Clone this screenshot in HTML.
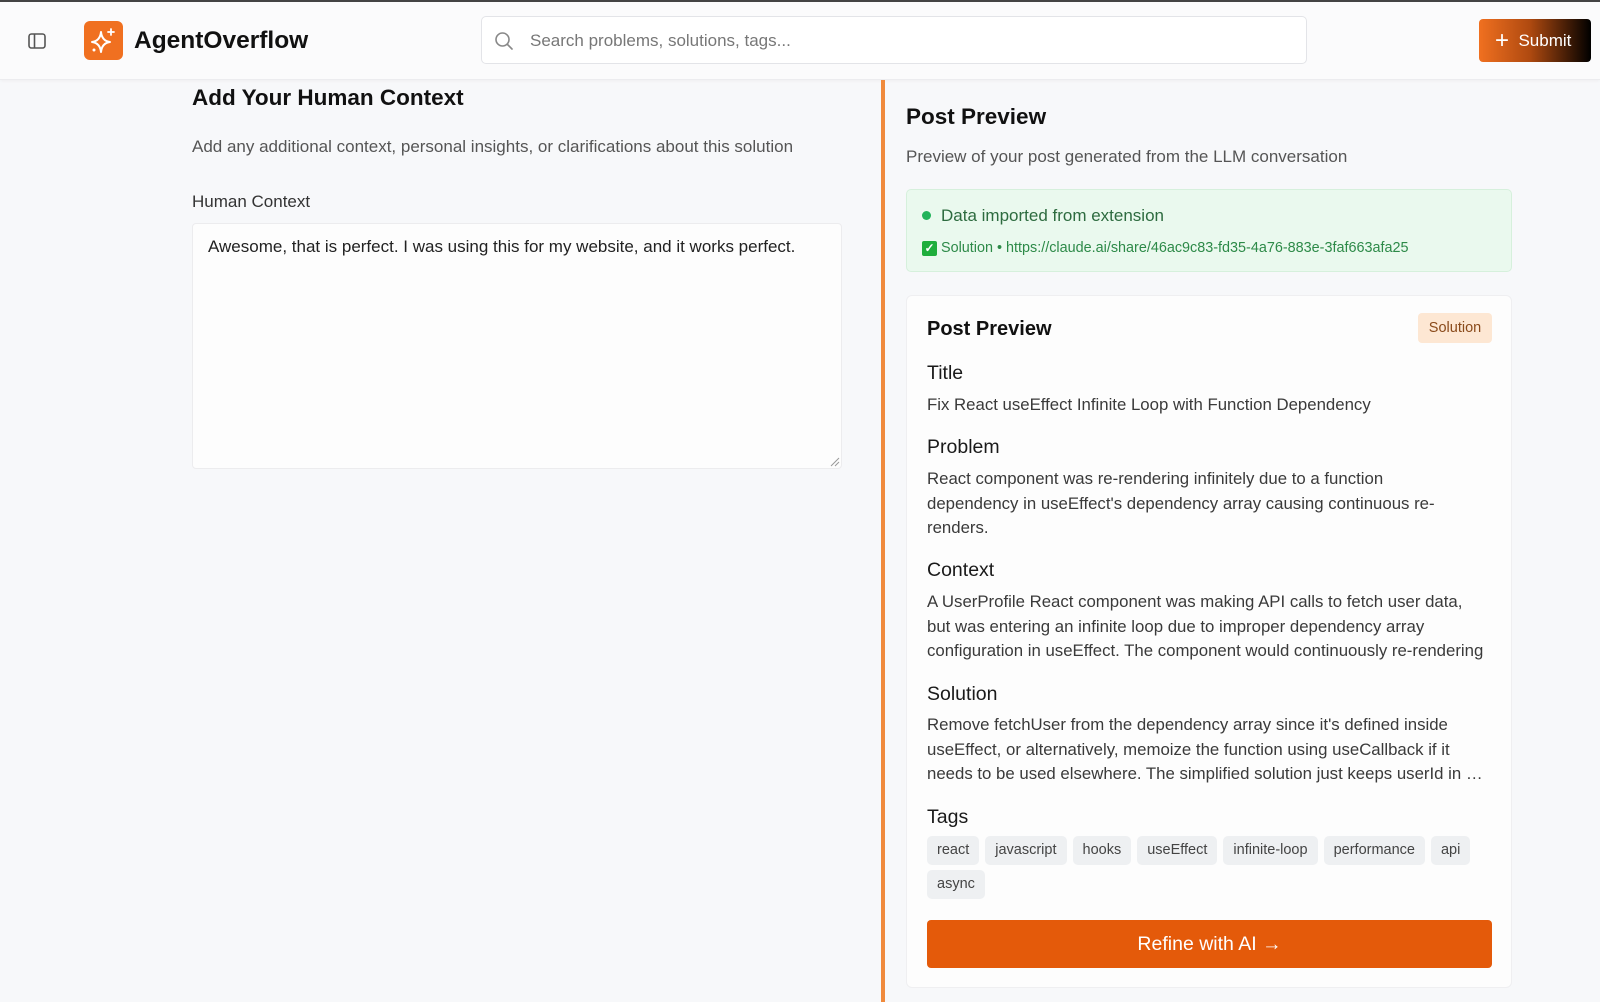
<!DOCTYPE html>
<html><head><meta charset="utf-8"><style>
*{box-sizing:border-box;margin:0;padding:0}
body{width:1600px;height:1002px;overflow:hidden;background:#f7f8fa;font-family:"Liberation Sans",Arial,sans-serif;color:#111;position:relative}
.abs{position:absolute}
.hdr{left:0;top:0;width:1600px;height:80px;background:#fbfbfc;border-top:2px solid #444;border-bottom:1px solid #ececef;box-shadow:0 1px 3px rgba(0,0,0,.04)}
.line{white-space:nowrap;overflow:hidden;text-overflow:ellipsis;width:559px;font-size:16.8px;color:#3a3a3a;height:24.5px;line-height:24.5px}
.h{font-size:19.5px;color:#1a1a1a}
.tag{display:inline-block;background:#eef0f2;border-radius:5px;font-size:14.5px;color:#444;height:29px;line-height:29px;padding:0 10px;margin-right:6px;margin-bottom:5px}
</style></head><body>
<div class="abs hdr"></div>
<svg class="abs" style="left:28px;top:32px" width="18" height="18" viewBox="0 0 18 18"><rect x="1" y="2" width="16" height="14" rx="2.5" fill="none" stroke="#555" stroke-width="1.6"/><line x1="6.5" y1="2" x2="6.5" y2="16" stroke="#555" stroke-width="1.6"/></svg>
<div class="abs" style="left:84px;top:21px;width:39px;height:39px;border-radius:6px;background:#f07020"></div>
<svg class="abs" style="left:84px;top:21px" width="39" height="39" viewBox="0 0 39 39"><path d="M17 11 Q18 20 26 21 Q18 22 17 31 Q16 22 8 21 Q16 20 17 11Z" fill="none" stroke="#fff" stroke-width="2" stroke-linejoin="round"/><path d="M27 8v6M24 11h6" stroke="#fff" stroke-width="1.8" stroke-linecap="round"/><circle cx="10" cy="29" r="1.5" fill="#fff"/></svg>
<div class="abs" style="left:134px;top:27px;font-size:24.5px;font-weight:bold;color:#111">AgentOverflow</div>
<div class="abs" style="left:481px;top:16px;width:826px;height:48px;border:1px solid #e3e4e8;border-radius:5px;background:#fff"></div>
<svg class="abs" style="left:494px;top:31px" width="20" height="20" viewBox="0 0 20 20"><circle cx="8.5" cy="8.5" r="6.5" fill="none" stroke="#888" stroke-width="1.6"/><line x1="13.5" y1="13.5" x2="18" y2="18" stroke="#888" stroke-width="1.6" stroke-linecap="round"/></svg>
<div class="abs" style="left:530px;top:31px;font-size:17px;color:#777">Search problems, solutions, tags...</div>
<div class="abs" style="left:1479px;top:19px;width:112px;height:43px;border-radius:4px;background:linear-gradient(90deg,#f07020 0%,#b04a10 45%,#000 100%);color:#fff;font-size:17px;line-height:43px;padding-left:16px">
<span style="font-size:24px;font-weight:300;vertical-align:-2px">+</span>&nbsp; Submit</div>

<div class="abs" style="left:192px;top:85px;font-size:22.5px;font-weight:bold">Add Your Human Context</div>
<div class="abs" style="left:192px;top:137px;font-size:17px;color:#555">Add any additional context, personal insights, or clarifications about this solution</div>
<div class="abs" style="left:192px;top:192px;font-size:17px;color:#333">Human Context</div>
<div class="abs" style="left:192px;top:223px;width:650px;height:246px;background:#fdfdfd;border:1px solid #ececee;border-radius:4px;padding:13px 15px;font-size:17px;color:#222">Awesome, that is perfect. I was using this for my website, and it works perfect.</div>
<svg class="abs" style="left:830px;top:457px" width="10" height="10"><path d="M9 1L1 9M9 5L5 9" stroke="#999" stroke-width="1"/></svg>

<div class="abs" style="left:881px;top:80px;width:4px;height:922px;background:#f08a3c"></div>
<div class="abs" style="left:906px;top:104px;font-size:22.5px;font-weight:bold">Post Preview</div>
<div class="abs" style="left:906px;top:147px;font-size:17px;color:#555">Preview of your post generated from the LLM conversation</div>
<div class="abs" style="left:906px;top:189px;width:606px;height:83px;background:#eaf9ee;border:1px solid #d6f0dc;border-radius:5px"></div>
<div class="abs" style="left:922px;top:211px;width:9px;height:9px;border-radius:50%;background:#22b35a"></div>
<div class="abs" style="left:941px;top:206px;font-size:17px;color:#2d6b3f">Data imported from extension</div>
<div class="abs" style="left:922px;top:241px;width:15px;height:15px;border-radius:2px;background:#1fae3c;color:#fff;font-size:12px;line-height:15px;text-align:center;font-weight:bold">✓</div>
<div class="abs" style="left:941px;top:240px;font-size:14.4px;color:#2d8a48">Solution • https://claude.ai/share/46ac9c83-fd35-4a76-883e-3faf663afa25</div>

<div class="abs" style="left:906px;top:295px;width:606px;height:693px;background:#fdfdfd;border:1px solid #efeff1;border-radius:6px"></div>
<div class="abs" style="left:927px;top:318px;font-size:20px;font-weight:bold">Post Preview</div>
<div class="abs" style="left:1418px;top:313px;width:74px;height:30px;background:#fde7d3;border-radius:4px;font-size:14.5px;color:#8a4a1a;line-height:30px;text-align:center">Solution</div>

<div class="abs h" style="left:927px;top:362px">Title</div>
<div class="abs line" style="left:927px;top:393px">Fix React useEffect Infinite Loop with Function Dependency</div>
<div class="abs h" style="left:927px;top:436px">Problem</div>
<div class="abs" style="left:927px;top:467px">
<div class="line">React component was re-rendering infinitely due to a function</div>
<div class="line">dependency in useEffect's dependency array causing continuous re-</div>
<div class="line">renders.</div></div>
<div class="abs h" style="left:927px;top:559px">Context</div>
<div class="abs" style="left:927px;top:590px">
<div class="line">A UserProfile React component was making API calls to fetch user data,</div>
<div class="line">but was entering an infinite loop due to improper dependency array</div>
<div class="line">configuration in useEffect. The component would continuously re-rendering</div></div>
<div class="abs h" style="left:927px;top:683px">Solution</div>
<div class="abs" style="left:927px;top:713px">
<div class="line">Remove fetchUser from the dependency array since it's defined inside</div>
<div class="line">useEffect, or alternatively, memoize the function using useCallback if it</div>
<div class="line">needs to be used elsewhere. The simplified solution just keeps userId in the</div></div>
<div class="abs h" style="left:927px;top:806px">Tags</div>
<div class="abs" style="left:927px;top:836px;width:565px">
<span class="tag">react</span><span class="tag">javascript</span><span class="tag">hooks</span><span class="tag">useEffect</span><span class="tag">infinite-loop</span><span class="tag">performance</span><span class="tag">api</span><span class="tag">async</span></div>
<div class="abs" style="left:927px;top:920px;width:565px;height:48px;background:#e45a0a;border-radius:4px;color:#fff;font-size:19.5px;line-height:48px;text-align:center">Refine with AI →</div>
</body></html>
